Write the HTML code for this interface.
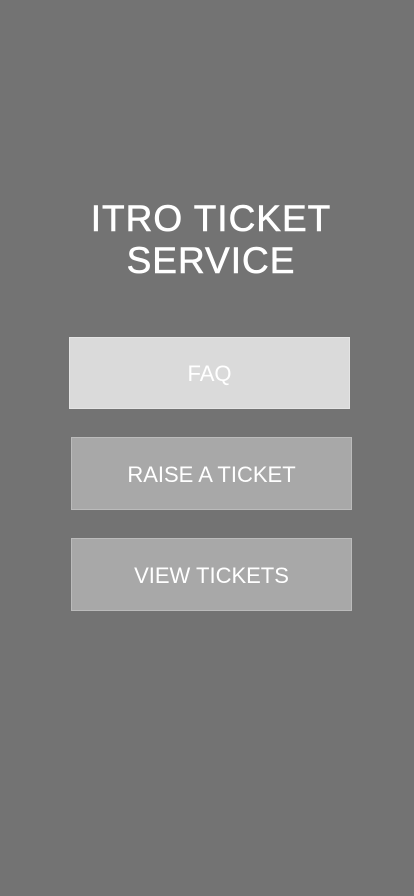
<!DOCTYPE html>
<html><head><style>
body{margin:0;width:414px;height:896px;background:#737373;position:relative;overflow:hidden;font-family:"Liberation Sans",sans-serif}
.t{position:absolute;top:198px;left:4px;width:414px;text-align:center;color:#fff;font-size:37px;line-height:42px;letter-spacing:1px;-webkit-text-stroke:0.6px #fff}
.b{position:absolute;width:281px;height:73px;line-height:73px;text-align:center;color:#fff;font-size:22px;box-sizing:border-box;border:1px solid #bbb}
</style></head><body>
<div class="t">ITRO TICKET<br>SERVICE</div>
<div class="b" style="left:69px;top:337px;height:72px;background:#dadada;border-color:#e4e4e4;line-height:72px">FAQ</div>
<div class="b" style="left:71px;top:437px;background:#a8a8a8">RAISE A TICKET</div>
<div class="b" style="left:71px;top:538px;background:#a8a8a8">VIEW TICKETS</div>
</body></html>
